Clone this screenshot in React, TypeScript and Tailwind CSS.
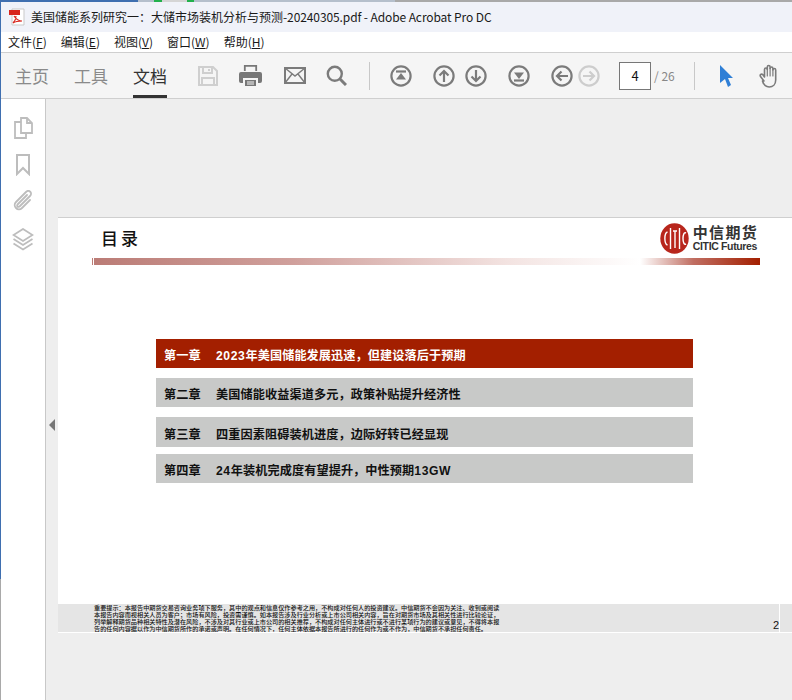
const FONT = "font-['Noto_Sans_CJK_SC','Noto_Sans',sans-serif]";

const tocRows = [
  { ch: "第一章", text: "2023年美国储能发展迅速，但建设落后于预期", active: true, h: "h-[29px]", mt: "mt-0" },
  { ch: "第二章", text: "美国储能收益渠道多元，政策补贴提升经济性", active: false, h: "h-[29px]", mt: "mt-[10px]" },
  { ch: "第三章", text: "四重因素阻碍装机进度，边际好转已经显现", active: false, h: "h-[30px]", mt: "mt-[10px]" },
  { ch: "第四章", text: "24年装机完成度有望提升，中性预期13GW", active: false, h: "h-[29px]", mt: "mt-[7px]" },
];

const menus = [
  { label: "文件(", key: "F" },
  { label: "编辑(", key: "E" },
  { label: "视图(", key: "V" },
  { label: "窗口(", key: "W" },
  { label: "帮助(", key: "H" },
];

function Circle({ children, color = "#7b7b7b" }: { children: React.ReactNode; color?: string }) {
  return (
    <svg width="22" height="22" viewBox="0 0 22 22" fill="none" stroke={color} strokeWidth="2.2">
      <circle cx="11" cy="11" r="9.6" />
      {children}
    </svg>
  );
}

function PdfIcon() {
  return (
    <svg width="16" height="18" viewBox="0 0 16 18">
      <path d="M3 1h12v16H3z" fill="#fff" stroke="#c9c9c9" />
      <rect x="0" y="2" width="11" height="5" fill="#d8241c" />
      <path d="M5 8c2 3 4 5 8 5-3 0-6 0-9 2 2-2 3-4 3-7" fill="none" stroke="#d8241c" strokeWidth="1.2" />
    </svg>
  );
}

function ToolbarIcons() {
  return (
    <>
      <svg className="ml-[31px]" width="20" height="20" viewBox="0 0 20 20" fill="none" stroke="#cfcfcf" strokeWidth="2">
        <path d="M1 1h14l4 4v14H1z" />
        <path d="M5 1v6h9V1M4 19v-7h12v7" />
        <path d="M11 3v2" />
      </svg>
      <svg className="ml-[21px]" width="23" height="21" viewBox="0 0 23 21" fill="#777">
        <path d="M5.8 6V.9h11.4V6" fill="none" stroke="#777" strokeWidth="1.8" />
        <path d="M2 7h19a2 2 0 0 1 2 2v7a2 2 0 0 1-2 2h-2v-5H4v5H2a2 2 0 0 1-2-2V9a2 2 0 0 1 2-2z" />
        <path d="M6 15h11v6H6z" />
        <path d="M8 17h7M8 19h7" stroke="#f5f5f5" strokeWidth="1" />
      </svg>
      <svg className="ml-[22px]" width="22" height="17" viewBox="0 0 22 17" fill="none" stroke="#7b7b7b" strokeWidth="1.8">
        <rect x="1" y="1" width="20" height="15" strokeWidth="2" />
        <path d="M1 1l10 8 10-8M1 16l7-9M21 16l-7-9" strokeWidth="1.4" />
      </svg>
      <svg className="ml-[20px]" width="21" height="21" viewBox="0 0 21 21" fill="none" stroke="#7b7b7b" strokeWidth="2.4">
        <circle cx="8.8" cy="8.8" r="7" />
        <path d="M14 14l6 6" strokeWidth="3" />
      </svg>
    </>
  );
}

function NavIcons() {
  return (
    <>
      <div className="ml-[20px]">
        <Circle>
          <path d="M6 6.5h10" />
          <path d="M11 8l-5 6.5h10z" fill="#7b7b7b" stroke="none" />
        </Circle>
      </div>
      <div className="ml-[21px]">
        <Circle>
          <path d="M11 17V6M6.5 10.5L11 6l4.5 4.5" />
        </Circle>
      </div>
      <div className="ml-[10px]">
        <Circle>
          <path d="M11 5v11M6.5 11.5L11 16l4.5-4.5" />
        </Circle>
      </div>
      <div className="ml-[21px]">
        <Circle>
          <path d="M6 15.5h10" />
          <path d="M11 14L6 7.5h10z" fill="#7b7b7b" stroke="none" />
        </Circle>
      </div>
      <div className="ml-[21px]">
        <Circle>
          <path d="M17 11H6M10.5 6.5L6 11l4.5 4.5" />
        </Circle>
      </div>
      <div className="ml-[5px]">
        <Circle color="#cdcdcd">
          <path d="M5 11h11M11.5 6.5L16 11l-4.5 4.5" />
        </Circle>
      </div>
    </>
  );
}

function CiticLogo() {
  return (
    <div className="flex items-center gap-[4px]">
      <svg width="29" height="31" viewBox="0 0 29 31">
        <ellipse cx="14.5" cy="15.5" rx="14.2" ry="15.2" fill="#b8261c" />
        <g fill="none" stroke="#fff" strokeWidth="1.4">
          <path d="M7.5 9C4 10 4 21 7.5 22" />
          <path d="M10.5 5v21" />
          <path d="M13 8h4M15 8v17" />
          <path d="M19.5 5v21" />
          <path d="M26 10c-4-2-4 13 0 11" />
        </g>
      </svg>
      <div className="flex flex-col items-start">
        <span className="text-[15px] leading-[16px] tracking-[1.3px] font-bold text-[#333] whitespace-nowrap">
          中信期货
        </span>
        <span className="font-['Liberation_Sans',sans-serif] text-[10.5px] leading-[12px] font-bold tracking-[-0.35px] text-[#333] whitespace-nowrap">
          CITIC Futures
        </span>
      </div>
    </div>
  );
}

export default function App() {
  return (
    <div className={`${FONT} w-[792px] h-[700px] overflow-hidden flex bg-[#eeeeee]`}>
      {/* edge of the window behind */}
      <div className="w-px shrink-0 bg-[linear-gradient(180deg,#3f6fb0_0,#3f6fb0_579px,#a9a9a9_579px)]" />
      <div className="flex-1 min-w-0 flex flex-col">
        <div className="h-[2px] shrink-0 bg-[linear-gradient(90deg,#3f6fb0_0,#3f6fb0_137px,#b5bfcc_137px,#b5bfcc_153px,#22b14c_153px,#22b14c_161px,#d5d5d5_161px,#d5d5d5_186px,#22b14c_186px,#22b14c_193px,#b5bfcc_193px,#b5bfcc_394px,#a9a9a9_394px)]" />
        {/* title bar */}
        <div className="h-[30px] shrink-0 bg-[#f0f2f9] flex items-center pl-[8px]">
          <PdfIcon />
          <span className="ml-[6px] text-[12px] text-[#1a1a1a] whitespace-nowrap">
            美国储能系列研究一：大储市场装机分析与预测
            <span className="tracking-[-0.1px]">-20240305.pdf - Adobe Acrobat Pro DC</span>
          </span>
        </div>
        {/* menu */}
        <div className="h-[20px] shrink-0 bg-white flex items-center pl-[7px] gap-[14px] text-[12px] text-[#1a1a1a]">
          {menus.map((m) => (
            <span key={m.key}>
              {m.label}
              <span className="underline">{m.key}</span>)
            </span>
          ))}
        </div>
        {/* toolbar */}
        <div className="h-[47px] shrink-0 bg-[#f5f5f5] border-y border-[#cfcfcf] flex items-center pl-[14px]">
          <span className="text-[17px] text-[#8a8a8a]">主页</span>
          <span className="ml-[25px] text-[17px] text-[#8a8a8a]">工具</span>
          <div className="ml-[25px] h-full relative flex items-center">
            <span className="text-[17px] text-[#333]">文档</span>
            <div className="absolute left-0 right-0 bottom-0 h-[3px] bg-[#333]" />
          </div>
          <ToolbarIcons />
          <div className="ml-[22px] w-px h-[28px] bg-[#c8c8c8]" />
          <NavIcons />
          <div className="ml-[19px] w-[32px] h-[28px] bg-white border border-[#777] flex items-center justify-center text-[13px] text-[#111]">
            4
          </div>
          <span className="ml-[3px] text-[12px] text-[#888] whitespace-nowrap">/ 26</span>
          <div className="ml-[19px] w-px h-[28px] bg-[#c8c8c8]" />
          <svg className="ml-[25px]" width="14" height="22" viewBox="0 0 14 22" fill="#2f7fd6">
            <path d="M0 0l13 13H8l3 7-3 2-3-8-5 4z" />
          </svg>
          <svg className="ml-[25px]" width="22" height="24" viewBox="0 0 22 24" fill="none" stroke="#7b7b7b" strokeWidth="1.6" strokeLinecap="round" strokeLinejoin="round">
            <path d="M5 17L1.5 12.5c-1.2-1.6 1-3.2 2.4-1.7L5.5 13V5.5c0-2 2.8-2 2.8 0V3c0-2 2.8-2 2.8 0v1.5c0-2 2.8-2 2.8 0V6c0-2 2.8-2 2.8 0v10c0 4.5-3 7-6.5 7s-5.6-2-6.7-6z" />
            <path d="M8.3 5v7M11.1 4v8M13.9 5v7" strokeWidth="1.2" />
          </svg>
        </div>
        {/* body */}
        <div className="flex-1 flex min-h-0">
          <div className="w-[45px] shrink-0 bg-white border-r border-[#c8c8c8] flex flex-col items-center pt-[18px]">
            <svg width="20" height="22" viewBox="0 0 20 22" fill="none" stroke="#bdbdbd" strokeWidth="1.8">
              <path d="M8 1h6l5 5v10H8zM14 1v5h5" />
              <path d="M8 5H2v16h11v-5" />
            </svg>
            <svg className="mt-[15px]" width="14" height="22" viewBox="0 0 14 22" fill="none" stroke="#bdbdbd" strokeWidth="2">
              <path d="M1 1h12v19l-6-6-6 6z" />
            </svg>
            <svg className="mt-[14px]" width="20" height="21" viewBox="0 0 20 21" fill="none" stroke="#bdbdbd" strokeWidth="1.8" strokeLinecap="round">
              <path d="M14 5L5 14c-2 2 0 4 2 2l10-10c3-3-1-7-4-4L3 12c-4 4 2 10 6 6l8-8" />
            </svg>
            <svg className="mt-[17px]" width="22" height="23" viewBox="0 0 22 23" fill="none" stroke="#bdbdbd" strokeWidth="1.8">
              <path d="M11 1l9.5 6-9.5 6-9.5-6z" />
              <path d="M1.5 11l9.5 6 9.5-6M1.5 15.5l9.5 6 9.5-6" />
            </svg>
          </div>
          <div className="w-[12px] shrink-0 flex items-start pt-[320px] pl-[3px]">
            <div className="w-0 h-0 border-y-[6px] border-y-transparent border-r-[6px] border-r-[#777]" />
          </div>
          {/* page */}
          <div className="flex-1 pt-[118px] min-w-0">
            <div className="bg-white border-t border-[#cfcfcf] h-[416px] flex flex-col">
              <div className="h-[40px] shrink-0 pl-[43px] pr-[34px] flex items-center justify-between">
                <span className="text-[17px] font-medium tracking-[3px] text-[#111]">目录</span>
                <CiticLogo />
              </div>
              <div className="h-[7px] shrink-0 ml-[34px] mr-[32px] flex">
                <div className="w-px bg-[#bb7c76]" />
                <div className="w-px" />
                <div className="flex-1 bg-[linear-gradient(90deg,#bb7c76_0,#d0a09c_30%,#f3e3e1_62%,#ffffff_82%,#c06e62_90%,#a31f00_100%)]" />
              </div>
              <div className="ml-[98px] w-[537px] mt-[74px] flex flex-col">
                {tocRows.map((r) => (
                  <div
                    key={r.ch}
                    className={`${r.h} ${r.mt} flex items-center pl-[8px] pt-[6px] font-['Liberation_Sans','Noto_Sans_CJK_SC',sans-serif] text-[12.15px] tracking-[0.1px] font-bold whitespace-nowrap ${
                      r.active ? "bg-[#a31f00] text-white" : "bg-[#c8c9c8] text-[#111]"
                    }`}
                  >
                    <span className="w-[52px] shrink-0">{r.ch}</span>
                    <span>
                      {r.text.split(/([0-9A-Z]+)/).map((part, i) =>
                        i % 2 ? (
                          <span key={i} className="tracking-[0.6px]">
                            {part}
                          </span>
                        ) : (
                          part
                        ),
                      )}
                    </span>
                  </div>
                ))}
              </div>
              <div className="mt-auto h-[28px] bg-[#e5e5e5] relative flex overflow-hidden">
                <div className="pl-[36px] w-[470px] text-[6.15px] leading-[7px] font-medium text-[#111] whitespace-nowrap">
                  <div>重要提示：本报告中期货交易咨询业务项下服务，其中的观点和信息仅作参考之用，不构成对任何人的投资建议。中信期货不会因为关注、收到或阅读</div>
                  <div>本报告内容而视相关人员为客户；市场有风险，投资需谨慎。如本报告涉及行业分析或上市公司相关内容，旨在对期货市场及其相关性进行比较论证，</div>
                  <div>列举解释期货品种相关特性及潜在风险，不涉及对其行业或上市公司的相关推荐，不构成对任何主体进行或不进行某项行为的建议或意见，不得将本报</div>
                  <div>告的任何内容据以作为中信期货所作的承诺或声明。在任何情况下，任何主体依据本报告所进行的任何作为或不作为，中信期货不承担任何责任。</div>
                </div>
                <div className="ml-auto w-px h-full bg-white mr-[12px] relative">
                  <span className="absolute right-[1px] bottom-0 text-[11px] leading-[14px] text-[#111] font-['Liberation_Sans',sans-serif]">2</span>
                </div>
              </div>
              <div className="h-px bg-white shrink-0" />
            </div>
          </div>
        </div>
      </div>
    </div>
  );
}
